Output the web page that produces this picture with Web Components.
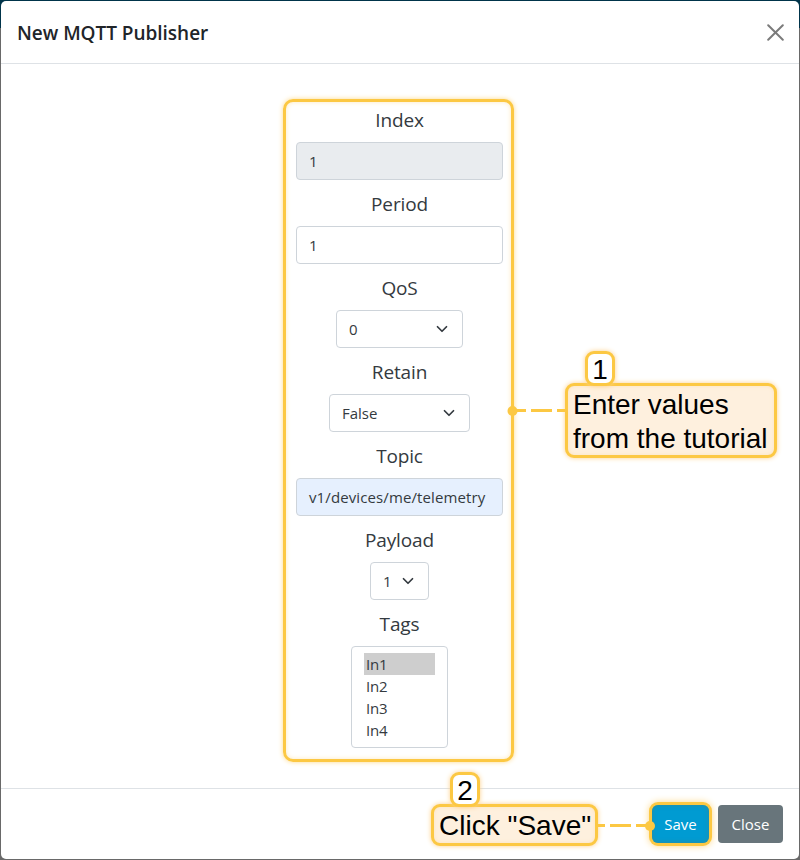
<!DOCTYPE html>
<html lang="en">
<head>
<meta charset="utf-8">
<title>New MQTT Publisher</title>
<style>
  html, body { margin: 0; height: 100%; }
  body {
    font-family: "Open Sans", "Noto Sans", sans-serif;
    font-size: 15px;
    color: #343a40;
    overflow: hidden;
    background: linear-gradient(#00344a 28px, #696969 28px);
  }
</style>
</head>
<body>
<mqtt-modal heading="New MQTT Publisher">
  <publisher-form>
    <form-field label="Index"><text-box value="1" variant="disabled"></text-box></form-field>
    <form-field label="Period"><text-box value="1"></text-box></form-field>
    <form-field label="QoS"><select-box value="0" width="127"></select-box></form-field>
    <form-field label="Retain"><select-box value="False" width="141"></select-box></form-field>
    <form-field label="Topic"><text-box value="v1/devices/me/telemetry" variant="filled"></text-box></form-field>
    <form-field label="Payload"><select-box value="1" width="59"></select-box></form-field>
    <form-field label="Tags"><tag-list items="In1,In2,In3,In4" selected="In1"></tag-list></form-field>
    <step-callout slot="callout" number="1" class="values">Enter values<br>from the tutorial</step-callout>
  </publisher-form>
  <action-button slot="footer" variant="primary">Save
    <step-callout slot="callout" number="2" class="save">Click "Save"</step-callout>
  </action-button>
  <action-button slot="footer" variant="secondary">Close</action-button>
</mqtt-modal>

<script>
class MqttModal extends HTMLElement {
  constructor() {
    super();
    this.attachShadow({ mode: 'open' });
  }

  connectedCallback() {
    this.shadowRoot.innerHTML = `
      <style>
        :host {
          display: flex;
          flex-direction: column;
          box-sizing: border-box;
          height: 858px;
          margin: 1px;
          border-radius: 5px;
          background: #fff;
        }
        header {
          display: flex;
          align-items: center;
          justify-content: space-between;
          box-sizing: border-box;
          height: 63px;
          padding: 0 15px 0 16px;
          border-bottom: 1px solid #dee2e6;
        }
        h5 {
          margin: 2px 0 0;
          color: #212529;
          font-size: 19px;
          line-height: 28px;
          font-weight: 600;
          letter-spacing: -0.03px;
        }
        svg { display: block; }
        main {
          flex: 1;
          display: flex;
          justify-content: center;
          align-items: flex-start;
          padding-top: 35px;
        }
        footer {
          display: flex;
          align-items: center;
          justify-content: flex-end;
          gap: 8px;
          box-sizing: border-box;
          height: 71px;
          padding-right: 16px;
          border-top: 1px solid #dee2e6;
        }
      </style>
      <header>
        <h5>${this.getAttribute('heading')}</h5>
        <svg width="17" height="17" viewBox="0 0 17 17" fill="none" stroke="#7b7b7b" stroke-width="2" stroke-linecap="round">
          <path d="M1.2 1.2l14.6 14.6M15.8 1.2L1.2 15.8"/>
        </svg>
      </header>
      <main><slot></slot></main>
      <footer><slot name="footer"></slot></footer>
    `;
  }
}

class PublisherForm extends HTMLElement {
  constructor() {
    super();
    this.attachShadow({ mode: 'open' });
    this.shadowRoot.innerHTML = `
      <style>
        :host {
          position: relative;
          display: flex;
          flex-direction: column;
          box-sizing: border-box;
          width: 231px;
          height: 663px;
          margin-left: -3px;
          padding: 0 8px 0 10px;
          border: 3px solid #fcc843;
          border-radius: 10px;
          box-shadow: 0 0 5px #fdd98a, inset 0 0 5px #fdeac0;
        }
      </style>
      <slot></slot>
      <slot name="callout"></slot>
    `;
  }
}

class FormField extends HTMLElement {
  constructor() {
    super();
    this.attachShadow({ mode: 'open' });
  }

  connectedCallback() {
    this.shadowRoot.innerHTML = `
      <style>
        :host {
          display: flex;
          flex-direction: column;
          align-items: center;
        }
        :host(:first-child) { margin-top: -6px; }
        label {
          height: 46px;
          font-size: 19px;
          line-height: 49px;
          letter-spacing: -0.15px;
        }
      </style>
      <label>${this.getAttribute('label')}</label>
      <slot></slot>
    `;
  }
}

class TextBox extends HTMLElement {
  constructor() {
    super();
    this.attachShadow({ mode: 'open' });
  }

  connectedCallback() {
    this.shadowRoot.innerHTML = `
      <style>
        :host {
          display: block;
          box-sizing: border-box;
          width: 207px;
          height: 38px;
          padding: 0 12px;
          border: 1px solid #ced4da;
          border-radius: 4px;
          background: #fff;
          line-height: 37px;
          letter-spacing: 0.11px;
          white-space: nowrap;
        }
        :host([variant="disabled"]) { background: #e9ecef; }
        :host([variant="filled"]) { background: #e6f0fe; }
      </style>
      <span>${this.getAttribute('value')}</span>
    `;
  }
}

class SelectBox extends HTMLElement {
  constructor() {
    super();
    this.attachShadow({ mode: 'open' });
  }

  connectedCallback() {
    this.shadowRoot.innerHTML = `
      <style>
        :host {
          display: flex;
          align-items: center;
          justify-content: space-between;
          box-sizing: border-box;
          width: ${this.getAttribute('width')}px;
          height: 38px;
          padding: 0 14px 0 12px;
          border: 1px solid #ced4da;
          border-radius: 4px;
          background: #fff;
          line-height: 36px;
        }
      </style>
      <span>${this.getAttribute('value')}</span>
      <svg width="12" height="12" viewBox="0 0 16 16" fill="none" stroke="#343a40" stroke-width="2.3" stroke-linecap="round" stroke-linejoin="round">
        <path d="M2 5l6 6 6-6"/>
      </svg>
    `;
  }
}

class TagList extends HTMLElement {
  constructor() {
    super();
    this.attachShadow({ mode: 'open' });
  }

  connectedCallback() {
    const selected = this.getAttribute('selected');
    const items = this.getAttribute('items').split(',');

    this.shadowRoot.innerHTML = `
      <style>
        :host {
          display: block;
          box-sizing: border-box;
          width: 97px;
          height: 102px;
          padding: 6px 12px;
          border: 1px solid #ced4da;
          border-radius: 4px;
          background: #fff;
        }
        .option {
          height: 22px;
          padding-left: 2px;
          line-height: 22px;
          letter-spacing: -0.2px;
        }
        .option.selected { background: #cecece; }
      </style>
      ${items.map((item) => `<div class="option${item === selected ? ' selected' : ''}">${item}</div>`).join('')}
    `;
  }
}

class ActionButton extends HTMLElement {
  constructor() {
    super();
    this.attachShadow({ mode: 'open' });
    this.shadowRoot.innerHTML = `
      <style>
        :host {
          position: relative;
          display: block;
          box-sizing: border-box;
          height: 38px;
          width: 65px;
          border-radius: 4px;
          color: #fff;
          line-height: 38px;
          text-align: center;
        }
        :host([variant="primary"]) {
          width: 57px;
          margin-right: 1px;
          border-radius: 6px;
          background: #009bd2;
          box-shadow: 0 0 0 3px #fcc843, 0 0 7px 3px #fdd98a, inset 0 0 5px #2f8a9c;
        }
        :host([variant="secondary"]) { background: #68757b; }
      </style>
      <slot></slot><slot name="callout"></slot>
    `;
  }
}

// Numbered note with a dashed connector ending in a dot
class StepCallout extends HTMLElement {
  constructor() {
    super();
    this.attachShadow({ mode: 'open' });
  }

  connectedCallback() {
    this.shadowRoot.innerHTML = `
      <style>
        :host {
          position: absolute;
          box-sizing: border-box;
          border: 3px solid #fcc843;
          border-radius: 9px;
          background: #fef0de;
          box-shadow: 0 0 5px #fdd08a, inset 0 0 4px #fde3bd;
          color: #000;
          font: 28px/34px "Liberation Sans", Arial, sans-serif;
          text-align: left;
          white-space: nowrap;
        }
        :host(.values) {
          left: 279px;
          top: 281px;
          width: 212px;
          height: 75px;
          padding: 2px 0 0 5px;
        }
        :host(.save) {
          left: -221px;
          top: -1px;
          width: 167px;
          height: 42px;
          padding: 2px 0 0 5px;
        }
        .number {
          position: absolute;
          left: 17px;
          top: -35px;
          box-sizing: border-box;
          width: 30px;
          height: 35px;
          border: 3px solid #fcc843;
          border-radius: 9px;
          background: #fff;
          box-shadow: 0 0 5px #fdd08a;
          line-height: 32px;
          text-align: center;
        }
        :host(.save) .number { left: 16px; }
        svg { position: absolute; overflow: visible; }
        :host(.values) svg { left: -56px; top: 20px; }
        :host(.save) svg { left: 162px; top: 14px; }
      </style>
      <slot></slot>
      <div class="number">${this.getAttribute('number')}</div>
      ${this.connector()}
    `;
  }

  connector() {
    if (this.classList.contains('values')) {
      return `
        <svg width="56" height="10" fill="none" stroke="#fcc843" stroke-width="3">
          <path d="M0 4.5h14M19 4.5h21M45 4.5h9"/>
          <circle cx="0.5" cy="5" r="5" fill="#fcc843" stroke="none"/>
        </svg>`;
    }
    return `
      <svg width="58" height="10" fill="none" stroke="#fcc843" stroke-width="3">
        <path d="M0 4.5h9M14 4.5h21M40 4.5h12"/>
        <circle cx="54" cy="5" r="5" fill="#fcc843" stroke="none"/>
      </svg>`;
  }
}

customElements.define('mqtt-modal', MqttModal);
customElements.define('publisher-form', PublisherForm);
customElements.define('form-field', FormField);
customElements.define('text-box', TextBox);
customElements.define('select-box', SelectBox);
customElements.define('tag-list', TagList);
customElements.define('action-button', ActionButton);
customElements.define('step-callout', StepCallout);
</script>
</body>
</html>
